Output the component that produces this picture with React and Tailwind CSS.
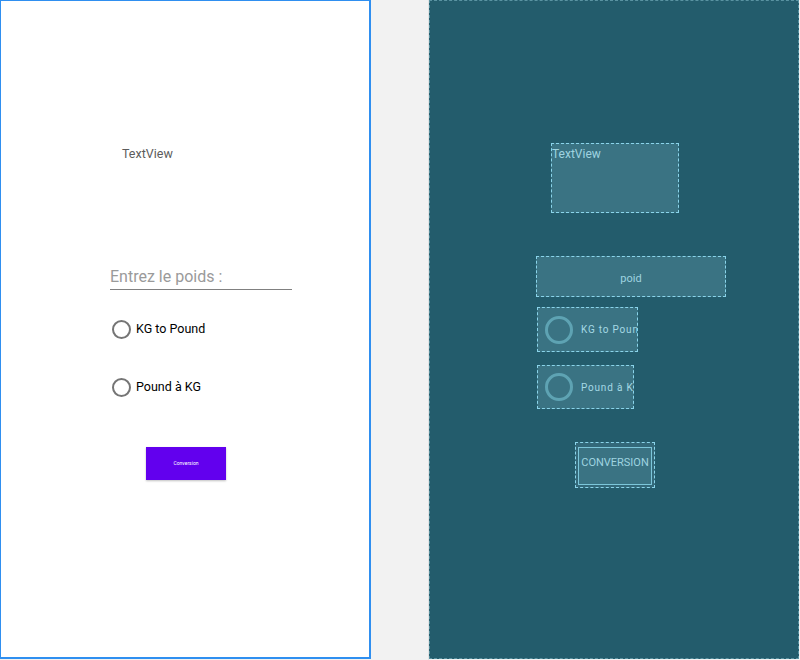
import React from 'react';

const font = { fontFamily: 'Roboto, "Liberation Sans", sans-serif' };

function Radio({ label, top }) {
    return (
        <div className={`flex items-center h-[20px] ml-[111px] ${top}`}>
            <div className="w-[19px] h-[19px] rounded-full border-2 border-[#757575]" />
            <span className="ml-[5px] text-[12.5px] text-black leading-[20px]">{label}</span>
        </div>
    );
}

function BlueRadio({ label, top, w, h }) {
    return (
        <div className={`flex items-center ml-[107px] ${top} ${w} ${h} bg-[#3a7383] border border-dashed border-[#8ad4ea] overflow-hidden`}>
            <div className="ml-[7px] w-[28px] h-[28px] rounded-full border-[3px] border-[#5ea3b3] shrink-0" />
            <span className="ml-[8px] text-[10px] tracking-[0.8px] text-[#a5d9e5] whitespace-nowrap">{label}</span>
        </div>
    );
}

export default function App() {
    return (
        <div className="w-[800px] h-[660px] bg-[#f2f2f2] flex items-start" style={font}>
            {/* Design view */}
            <div className="w-[371px] h-[659px] bg-white border border-[#2f8ff0] border-r-2 border-b-2 flex flex-col shrink-0">
                <div className="mt-[145px] ml-[121px] text-[12.5px] leading-[16px] text-[#5c5c5c]">TextView</div>
                <div className="mt-[104px] ml-[109px] w-[182px] h-[24px] border-b border-[#808080] text-[16px] leading-[22px] text-[#9a9a9a]">Entrez le poids :</div>
                <Radio label="KG to Pound" top="mt-[29px]" />
                <Radio label="Pound à KG" top="mt-[38px]" />
                <div className="mt-[50px] ml-[145px] w-[80px] h-[33px] bg-[#6200ee] shadow-[0_1px_2px_rgba(0,0,0,0.25)] flex items-center justify-center text-[5px] text-white">Conversion</div>
            </div>

            <div className="w-[58px] h-[660px] border-r border-[#e3e3e3] shrink-0" />

            {/* Blueprint view */}
            <div className="w-[370px] h-[659px] bg-[#235c6c] border border-dashed border-[#5a93a2] flex flex-col shrink-0">
                <div className="mt-[142px] ml-[121px] w-[128px] h-[70px] bg-[#3a7383] border border-dashed border-[#8ad4ea] text-[12px] leading-[20px] text-[#9fd3e0]">TextView</div>
                <div className="mt-[43px] ml-[106px] w-[190px] h-[41px] bg-[#3a7383] border border-dashed border-[#8ad4ea] flex items-center justify-center pt-[6px] text-[11px] text-[#9fd3e0]">poid</div>
                <BlueRadio label="KG to Pound" top="mt-[10px]" w="w-[101px]" h="h-[45px]" />
                <BlueRadio label="Pound à KG" top="mt-[13px]" w="w-[97px]" h="h-[44px]" />
                <div className="mt-[33px] ml-[145px] w-[80px] h-[46px] border border-dashed border-[#8ad4ea] bg-[#33697a] p-[2px] flex">
                    <div className="flex-1 mt-[2px] border border-[#7cc6da] bg-[#3a7383] flex items-center justify-center pb-[5px] text-[11px] text-[#9fd3e0]">CONVERSION</div>
                </div>
            </div>
        </div>
    );
}
